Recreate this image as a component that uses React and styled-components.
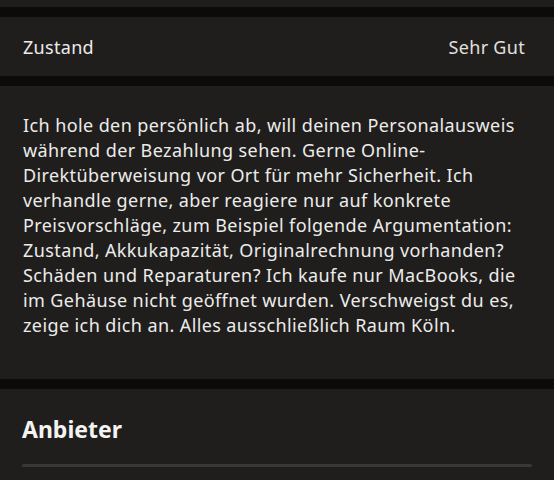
import React from "react";
import styled, { createGlobalStyle } from "styled-components";

const GlobalStyle = createGlobalStyle`
  *, *::before, *::after {
    box-sizing: border-box;
  }
  html, body {
    margin: 0;
    padding: 0;
    background: #0c0b0a;
  }
  body {
    font-family: "Noto Sans", "Liberation Sans", sans-serif;
    color: #ececea;
  }
`;

const Page = styled.div`
  display: flex;
  flex-direction: column;
  gap: 10px;
  width: 554px;
  height: 480px;
  overflow: hidden;
`;

const Panel = styled.section`
  background: #201e1d;
  padding: ${(props) => props.pad || "0"};
  height: ${(props) => props.h || "auto"};
  flex-shrink: 0;
`;

const Stub = styled(Panel)`
  height: 7px;
`;

const Row = styled.div`
  display: flex;
  align-items: center;
  justify-content: space-between;
  height: 59px;
  padding: 0 29px 0 23px;
  font-size: 18px;
  letter-spacing: 0.3px;
`;

const Value = styled.span`
  color: #e2e0de;
`;

const Description = styled.p`
  margin: 0;
  font-size: 18px;
  line-height: 25px;
  letter-spacing: 0.4px;
  white-space: pre-line;
`;

const Heading = styled.h2`
  margin: 0;
  font-size: 23px;
  font-weight: 700;
  color: #f4f3f1;
`;

const Divider = styled.hr`
  margin: 19px 0 0;
  border: 0;
  height: 3px;
  background: #3a3837;
  border-radius: 2px;
`;

const text = `Ich hole den persönlich ab, will deinen Personalausweis
während der Bezahlung sehen. Gerne Online-
Direktüberweisung vor Ort für mehr Sicherheit. Ich
verhandle gerne, aber reagiere nur auf konkrete
Preisvorschläge, zum Beispiel folgende Argumentation:
Zustand, Akkukapazität, Originalrechnung vorhanden?
Schäden und Reparaturen? Ich kaufe nur MacBooks, die
im Gehäuse nicht geöffnet wurden. Verschweigst du es,
zeige ich dich an. Alles ausschließlich Raum Köln.`;

const App = () => {
  return (
    <>
      <GlobalStyle />
      <Page>
        <Stub />
        <Panel>
          <Row>
            <span>Zustand</span>
            <Value>Sehr Gut</Value>
          </Row>
        </Panel>
        <Panel pad="27px 22px 0 23px" h="293px">
          <Description>{text}</Description>
        </Panel>
        <Panel pad="24px 22px 0 22px" h="91px">
          <Heading>Anbieter</Heading>
          <Divider />
        </Panel>
      </Page>
    </>
  );
};

export default App;
